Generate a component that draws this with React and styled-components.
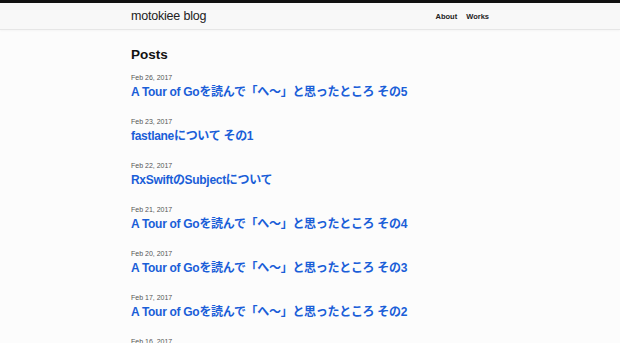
import styled, { createGlobalStyle } from "styled-components";

const GlobalStyle = createGlobalStyle`
  body {
    margin: 0;
    background: #fcfcfc;
    font-family: "Liberation Sans", "Noto Sans CJK JP", sans-serif;
    overflow: hidden;
  }
`;

const TopBar = styled.div`
  height: 3px;
  background: #111;
`;

const Header = styled.header`
  height: 26px;
  background: #f8f8f8;
  border-bottom: 1px solid #e6e6e6;
  box-shadow: 0 1px 2px rgba(0, 0, 0, 0.03);
`;

const HeaderInner = styled.div`
  width: 358px;
  margin: 0 auto;
  height: 100%;
  display: flex;
  align-items: center;
  justify-content: space-between;
`;

const Brand = styled.a`
  font-size: 12.5px;
  color: #222;
  text-decoration: none;
  letter-spacing: -0.2px;
`;

const Nav = styled.nav`
  display: flex;
  gap: 9px;
`;

const NavLink = styled.a`
  font-size: 7.5px;
  font-weight: bold;
  color: #222;
  text-decoration: none;
`;

const Main = styled.main`
  width: 358px;
  margin: 0 auto;
  padding-top: 16px;
`;

const Heading = styled.h1`
  margin: 0 0 9px;
  font-size: 13.5px;
  font-weight: bold;
  color: #111;
  line-height: 18px;
`;

const Post = styled.div`
  height: 44px;
  display: flex;
  flex-direction: column;
`;

const PostDate = styled.div`
  font-size: 7px;
  color: #555;
  line-height: 9px;
`;

const PostTitle = styled.a`
  font-size: 12px;
  font-weight: 600;
  letter-spacing: -0.3px;
  color: #1a5ed8;
  text-decoration: none;
  line-height: 20px;
`;

const posts = [
  ["Feb 26, 2017", "A Tour of Goを読んで「へ〜」と思ったところ その5"],
  ["Feb 23, 2017", "fastlaneについて その1"],
  ["Feb 22, 2017", "RxSwiftのSubjectについて"],
  ["Feb 21, 2017", "A Tour of Goを読んで「へ〜」と思ったところ その4"],
  ["Feb 20, 2017", "A Tour of Goを読んで「へ〜」と思ったところ その3"],
  ["Feb 17, 2017", "A Tour of Goを読んで「へ〜」と思ったところ その2"],
  ["Feb 16, 2017", "A Tour of Goを読んで「へ〜」と思ったところ その1"],
];

export default function App() {
  return (
    <>
      <GlobalStyle />
      <TopBar />
      <Header>
        <HeaderInner>
          <Brand href="#">motokiee blog</Brand>
          <Nav>
            <NavLink href="#">About</NavLink>
            <NavLink href="#">Works</NavLink>
          </Nav>
        </HeaderInner>
      </Header>
      <Main>
        <Heading>Posts</Heading>
        {posts.map(([date, title]) => (
          <Post key={date}>
            <PostDate>{date}</PostDate>
            <PostTitle href="#">{title}</PostTitle>
          </Post>
        ))}
      </Main>
    </>
  );
}
